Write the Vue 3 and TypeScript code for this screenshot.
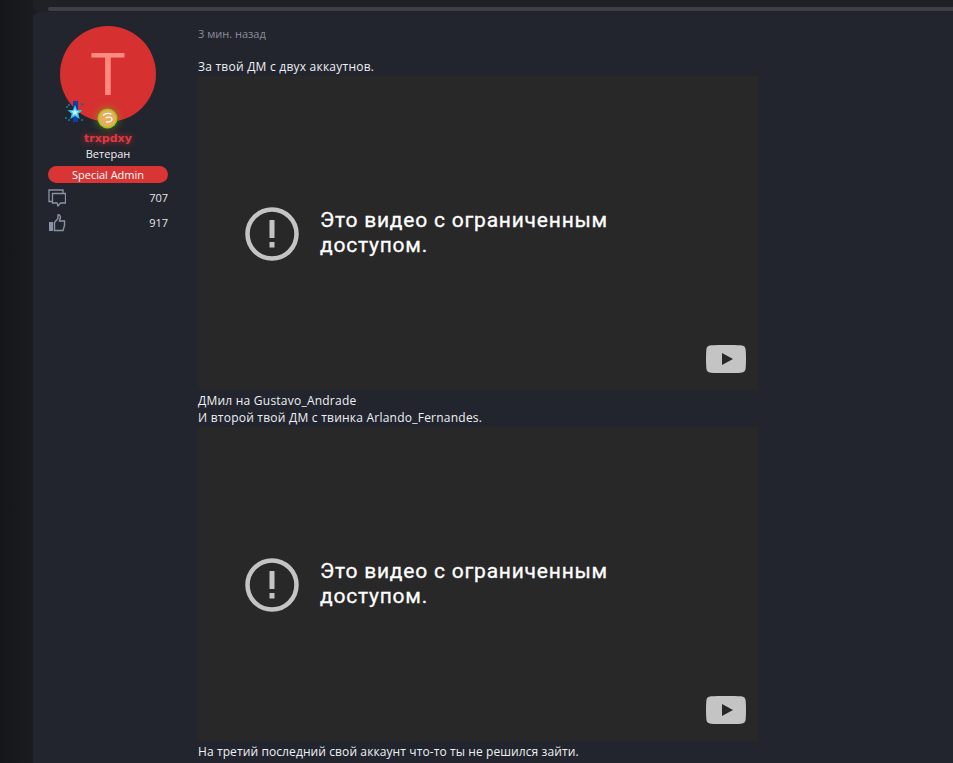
<script setup lang="ts">
const stats = [
  { id: 'msg', value: 707 },
  { id: 'like', value: 917 },
]
</script>

<template>
  <div class="page">
    <div class="prev-card"><div class="prev-bar"></div></div>
    <div class="post">
      <aside class="author">
        <div class="avatar-wrap">
          <div class="avatar">T</div>
          <svg class="star" viewBox="0 0 20 22" width="20" height="22">
            <path d="M8 0h5v21H8z" fill="#0b3fa8" />
            <path d="M10 4l2 5 5.500.3-4.200 3.400 1.400 5.300-4.700-3-4.700 3 1.400-5.300-4.200-3.400 5.500-.3z" fill="#37c6f4" />
            <path d="M10 7.500l1 2.700 2.800.1-2.200 1.700.8 2.700-2.400-1.600-2.400 1.600.8-2.700-2.200-1.700 2.800-.1z" fill="#c8f2ff" />
            <path d="M1 5h2v2H1zM3 3h2v2H3zM16 2h1v3h-1zM18 2h1v2h-1zM0 16h2v2H0zM3 18h2v2H3zM16 18h2v2h-2z" fill="#14688f" />
          </svg>
          <div class="medal">
            <svg viewBox="0 0 17 17" width="17" height="17">
              <path d="M4 5.500C6 3.500 9.500 3 12.500 4M6.500 8c2-1 6-1.500 6.500.8.300 2.500-3 3.700-6 3" fill="none" stroke="#fff" stroke-width="1.300" />
            </svg>
          </div>
        </div>
        <div class="nick">trxpdxy</div>
        <div class="rank">Ветеран</div>
        <div class="role">Special Admin</div>
        <div v-for="s in stats" :key="s.id" class="stat">
          <svg v-if="s.id === 'msg'" viewBox="0 0 18 18" width="18" height="18">
            <path d="M4.500 12.500H1V1h14v3" fill="none" stroke="#8a93a6" stroke-width="1.300" />
            <path d="M4.500 4.500h13v9.500h-5l-2.500 3-1-3H4.500z" fill="none" stroke="#8a93a6" stroke-width="1.300" />
          </svg>
          <svg v-else viewBox="0 0 18 18" width="18" height="18">
            <path d="M1 8h4v9H1z" fill="#8a93a6" />
            <path d="M6.500 8.500L10 4.500V1h1.500l1 2-1 4h5v4.500l-1.500 5H6.500z" fill="none" stroke="#8a93a6" stroke-width="1.400" />
          </svg>
          <span>{{ s.value }}</span>
        </div>
      </aside>
      <main class="body">
        <div class="time">3 мин. назад</div>
        <div class="text">
          <p class="line">За твой ДМ с двух аккаутнов.</p>
          <div class="video">
            <div class="notice">
              <svg viewBox="0 0 54 54" width="54" height="54">
                <circle cx="27" cy="27" r="24.500" fill="none" stroke="#c4c4c4" stroke-width="4.500" />
                <rect x="24.500" y="13" width="5" height="18" fill="#c4c4c4" />
                <rect x="24.500" y="35" width="5" height="5.500" fill="#c4c4c4" />
              </svg>
              <div class="notice-text">Это видео с ограниченным доступом.</div>
            </div>
            <svg class="yt" viewBox="0 0 40 28" width="40" height="28">
              <path d="M5 .3C12 0 28 0 35 .3 38 .5 39.500 2 39.700 5c.4 6 .4 12 0 18-.2 3-1.700 4.500-4.700 4.700-7 .4-23 .4-30 0C2 27.500.5 26 .3 23-.1 17-.1 11 .3 5 .5 2 2 .5 5 .3z" fill="#c4c4c4" />
              <path d="M16 8l11 6-11 6z" fill="#282828" />
            </svg>
          </div>
          <p class="line after-video">ДМил на Gustavo_Andrade</p>
          <p class="line">И второй твой ДМ с твинка Arlando_Fernandes.</p>
          <div class="video">
            <div class="notice">
              <svg viewBox="0 0 54 54" width="54" height="54">
                <circle cx="27" cy="27" r="24.500" fill="none" stroke="#c4c4c4" stroke-width="4.500" />
                <rect x="24.500" y="13" width="5" height="18" fill="#c4c4c4" />
                <rect x="24.500" y="35" width="5" height="5.500" fill="#c4c4c4" />
              </svg>
              <div class="notice-text">Это видео с ограниченным доступом.</div>
            </div>
            <svg class="yt" viewBox="0 0 40 28" width="40" height="28">
              <path d="M5 .3C12 0 28 0 35 .3 38 .5 39.500 2 39.700 5c.4 6 .4 12 0 18-.2 3-1.700 4.500-4.700 4.700-7 .4-23 .4-30 0C2 27.500.5 26 .3 23-.1 17-.1 11 .3 5 .5 2 2 .5 5 .3z" fill="#c4c4c4" />
              <path d="M16 8l11 6-11 6z" fill="#282828" />
            </svg>
          </div>
          <p class="line after-video tight">На третий последний свой аккаунт что-то ты не решился зайти.</p>
        </div>
      </main>
    </div>
  </div>
</template>

<style>
html, body { margin: 0; background: #17181c; overflow: hidden; }
</style>

<style scoped>
.page {
  height: 763px;
  overflow: hidden;
  padding-left: 33px;
  background: linear-gradient(90deg, #15161a 0, #1b1c20 33px);
  font-family: "Open Sans", "Noto Sans", sans-serif;
  font-size: 12px;
  color: #eef0f4;
}
.prev-card {
  height: 12px;
  padding: 7px 0 0 15px;
  box-sizing: border-box;
  background: #1f2126;
  border-bottom-left-radius: 6px;
}
.prev-bar {
  height: 4px;
  background: #3d4048;
  border-radius: 2px 0 0 2px;
}
.post {
  display: flex;
  background: #22252d;
  border-top-left-radius: 6px;
  height: 751px;
  padding: 14px 0 0 15px;
  box-sizing: border-box;
}
.author {
  width: 120px;
  flex: none;
  display: flex;
  flex-direction: column;
  align-items: center;
}
.avatar-wrap { position: relative; width: 96px; height: 96px; }
.avatar {
  width: 96px;
  height: 96px;
  border-radius: 50%;
  background: #d63030;
  color: #ff8a80;
  font-family: "Roboto", sans-serif;
  font-size: 60px;
  line-height: 97px;
  text-align: center;
}
.star { position: absolute; left: 5px; top: 75px; }
.medal {
  position: absolute;
  left: 38.500px;
  top: 83.500px;
  width: 17px;
  height: 17px;
  border-radius: 50%;
  background: #e8ae5c;
  box-shadow: 0 0 0 1.500px #9ac41a, 0 0 8px 2px rgba(120, 200, 30, .5);
}
.medal svg { display: block; }
.nick {
  margin-top: 9px;
  font-family: "DejaVu Sans", sans-serif;
  font-size: 11px;
  font-weight: 700;
  line-height: 15px;
  color: #dd3a3f;
  text-shadow: 0 0 6px rgba(230, 50, 60, .8);
}
.rank { font-size: 11px; line-height: 16px; }
.role {
  width: 120px;
  margin-top: 4px;
  height: 17px;
  line-height: 18px;
  border-radius: 9px;
  background: #da3535;
  color: #fff;
  text-align: center;
  font-size: 11px;
}
.stat {
  width: 120px;
  height: 25px;
  display: flex;
  justify-content: space-between;
  align-items: center;
  color: #e4e6ea;
  font-size: 11px;
  position: relative;
  top: 2px;
}
.body { margin-left: 30px; flex: 1; }
.time {
  color: #8a8f9c;
  font-size: 11px;
  line-height: 15px;
}
.text { margin-top: 17px; letter-spacing: .23px; }
.line { margin: 0; line-height: 17px; }
.after-video { margin-top: 2px; }
.tight { letter-spacing: .1px; }
.video {
  position: relative;
  width: 560px;
  height: 314px;
  margin-top: 1px;
  background: #282828;
  letter-spacing: 0;
}
.notice {
  position: absolute;
  left: 47px;
  top: 131px;
  display: flex;
  align-items: center;
  gap: 21px;
}
.notice-text {
  width: 310px;
  padding-bottom: 2px;
  font-family: "Roboto", sans-serif;
  font-size: 21px;
  font-weight: 400;
  -webkit-text-stroke: .3px #fff;
  letter-spacing: .78px;
  line-height: 25px;
  color: #fff;
}
.yt { position: absolute; right: 12px; bottom: 17px; }
</style>
